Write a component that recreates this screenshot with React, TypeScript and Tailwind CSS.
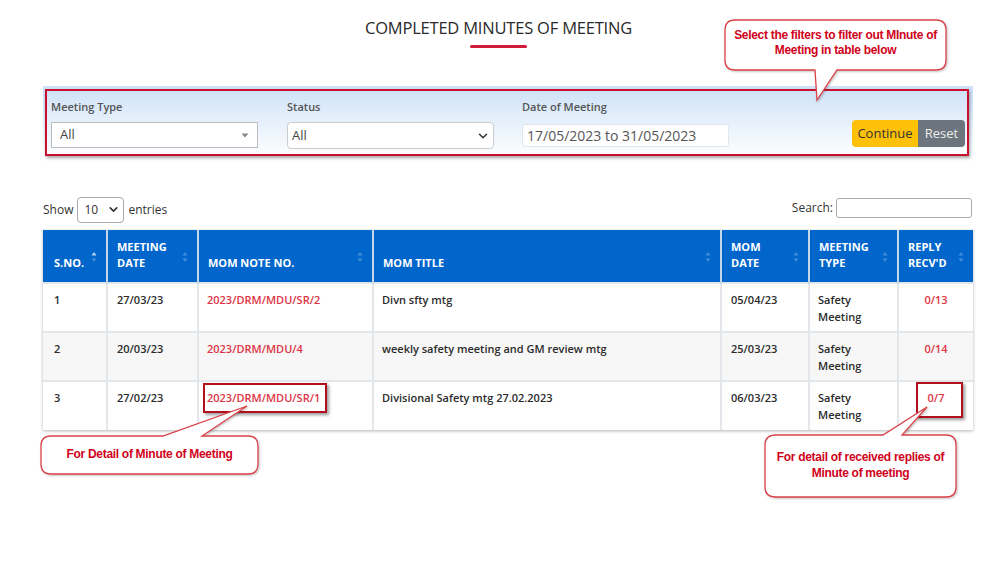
import { ChevronDown } from 'lucide-react';

const ROWS = [
  { sno: 1, date: '27/03/23', note: '2023/DRM/MDU/SR/2', title: 'Divn sfty mtg', momDate: '05/04/23', type: 'Safety Meeting', reply: '0/13' },
  { sno: 2, date: '20/03/23', note: '2023/DRM/MDU/4', title: 'weekly safety meeting and GM review mtg', momDate: '25/03/23', type: 'Safety Meeting', reply: '0/14' },
  { sno: 3, date: '27/02/23', note: '2023/DRM/MDU/SR/1', title: 'Divisional Safety mtg 27.02.2023', momDate: '06/03/23', type: 'Safety Meeting', reply: '0/7' },
];

const HEADERS = [
  { label: ['S.NO.'], w: 'w-[64px]', active: true },
  { label: ['MEETING', 'DATE'], w: 'w-[91px]' },
  { label: ['MOM NOTE NO.'], w: 'w-[175px]' },
  { label: ['MOM TITLE'], w: 'w-[348px]' },
  { label: ['MOM', 'DATE'], w: 'w-[88px]' },
  { label: ['MEETING', 'TYPE'], w: 'w-[89px]' },
  { label: ['REPLY', "RECV'D"], w: 'w-[75px]' },
];

function SortIcon({ active }: { active?: boolean }) {
  return (
    <svg width="6" height="12" viewBox="0 0 6 12" className="absolute right-[9px] top-[21px]">
      <path d="M3 1 L5.5 4.5 L0.5 4.5 Z" fill="#ffffff" fillOpacity={active ? 0.7 : 0.25} />
      <path d="M3 11 L5.5 7.5 L0.5 7.5 Z" fill="#ffffff" fillOpacity={0.25} />
    </svg>
  );
}

const cell = 'align-top pt-[7px] leading-[17px] border-l-2 border-[#e3e6ea]';

export default function App() {
  return (
    <div className="relative w-[1007px] h-[566px] bg-white overflow-hidden font-['Open_Sans','Liberation_Sans',sans-serif] text-[#333]">
      <div className="pl-[43px] pr-[34px] pt-[16px]">

        {/* Title */}
        <div className="flex flex-col items-center">
          <h1 className="text-[16.5px] leading-[24px] font-medium text-[#2a2a2a] tracking-[-0.2px] ml-[-19px]">COMPLETED MINUTES OF MEETING</h1>
          <div className="w-[57px] h-[3px] bg-[#d21c3c] mt-[5px] ml-[-19px] rounded-full" />
        </div>

        {/* Filters */}
        <div className="relative mt-[38px] h-[72px] bg-gradient-to-b from-[#cde1f8] to-[#ffffff] pl-[8px] pr-[7px] pt-[13px] flex items-start">
          <div className="w-[207px] flex flex-col">
            <label className="text-[11px] font-semibold text-[#555] leading-[16px]">Meeting Type</label>
            <div className="mt-[7px] h-[26px] bg-white border border-[#bbb] flex items-center justify-between px-[8px]">
              <span className="text-[13px] text-[#444]">All</span>
              <svg width="8" height="5" viewBox="0 0 8 5"><path d="M0.5 0.5 L7.5 0.5 L4 4.5 Z" fill="#888" /></svg>
            </div>
          </div>
          <div className="w-[207px] ml-[29px] flex flex-col">
            <label className="text-[11px] font-semibold text-[#555] leading-[16px]">Status</label>
            <div className="mt-[7px] h-[27px] bg-white border border-[#ccc] rounded-[4px] flex items-center justify-between pl-[4px] pr-[3px]">
              <span className="text-[13px] text-[#444]">All</span>
              <ChevronDown size={14} strokeWidth={2.5} className="text-[#333]" />
            </div>
          </div>
          <div className="w-[207px] ml-[28px] flex flex-col">
            <label className="text-[11px] font-semibold text-[#555] leading-[16px]">Date of Meeting</label>
            <div className="mt-[9px] h-[23px] bg-white border border-[#e2e6ea] rounded-[3px] flex items-center px-[4px]">
              <span className="text-[14px] text-[#555]">17/05/2023 to 31/05/2023</span>
            </div>
          </div>
          <div className="ml-auto mt-[21px] mr-[1px] flex h-[27px] rounded-[4px] overflow-hidden">
            <button className="w-[66px] bg-[#ffc107] text-[13px] text-[#333]">Continue</button>
            <button className="w-[47px] bg-[#6c757d] text-[13px] text-[#eee]">Reset</button>
          </div>
          <div className="absolute left-[2px] right-[4px] top-[3px] bottom-[2px] border-2 border-[#c8102e] shadow-[1px_2px_3px_rgba(0,0,0,0.35)] pointer-events-none" />
        </div>

        {/* Show / Search */}
        <div className="mt-[37px] flex items-center justify-between h-[26px]">
          <div className="flex items-center gap-[4px] text-[12px] text-[#333] pt-[3px]">
            <span>Show</span>
            <div className="w-[47px] h-[26px] border border-[#aaa] rounded-[4px] flex items-center justify-between pl-[6px] pr-[3px]">
              <span className="text-[12px]">10</span>
              <ChevronDown size={13} strokeWidth={3} />
            </div>
            <span>entries</span>
          </div>
          <div className="flex items-center gap-[3px] text-[12px] text-[#333] mr-[1px]">
            <span>Search:</span>
            <div className="w-[136px] h-[20px] border border-[#aaa] rounded-[3px] bg-white" />
          </div>
        </div>

        {/* Table */}
        <div className="mt-[9px] shadow-[0_1px_3px_rgba(0,0,0,0.3)]">
          <table className="w-full table-fixed border-collapse text-[11px] font-semibold text-[#2b2b2b]">
            <colgroup>
              {HEADERS.map((h, i) => (
                <col key={i} className={h.w} />
              ))}
            </colgroup>
            <thead>
              <tr className="h-[53px] bg-[#0066cc]">
                {HEADERS.map((h, i) => (
                  <th
                    key={i}
                    className={`relative align-bottom text-left ${i === 0 ? 'pl-[11px]' : 'pl-[9px] border-l-2 border-[#c6d7ec]'} pb-[11px] text-white font-bold leading-[16px]`}
                  >
                    {h.label.map((l) => (
                      <div key={l}>{l}</div>
                    ))}
                    <SortIcon active={h.active} />
                  </th>
                ))}
              </tr>
            </thead>
            <tbody>
              {ROWS.map((r) => (
                <tr key={r.sno} className={`h-[49px] ${r.sno === 2 ? 'bg-[#f7f7f7]' : 'bg-white'} border-t-2 border-[#e3e6ea]`}>
                  <td className="align-top pl-[11px] pt-[7px] leading-[17px]">{r.sno}</td>
                  <td className={`${cell} pl-[9px]`}>{r.date}</td>
                  <td className={`${cell} pl-[8px] text-[#dc3545]`}>{r.note}</td>
                  <td className={`${cell} pl-[8px]`}>{r.title}</td>
                  <td className={`${cell} pl-[9px]`}>{r.momDate}</td>
                  <td className={`${cell} pl-[8px] pr-[20px]`}>{r.type}</td>
                  <td className={`${cell} text-center text-[#dc3545]`}>{r.reply}</td>
                </tr>
              ))}
            </tbody>
          </table>
        </div>
      </div>

      {/* Annotation overlays */}
      <div className="absolute left-[203px] top-[383px] w-[124px] h-[30px] border-2 border-[#b3101e] shadow-[2px_2px_3px_rgba(0,0,0,0.4)] pointer-events-none" />
      <div className="absolute left-[916px] top-[382px] w-[47px] h-[36px] border-2 border-[#b3101e] shadow-[2px_2px_3px_rgba(0,0,0,0.4)] pointer-events-none" />

      <svg className="absolute left-0 top-0 pointer-events-none" width="1007" height="566" viewBox="0 0 1007 566">
        <defs>
          <filter id="sh" x="-10%" y="-10%" width="130%" height="140%">
            <feDropShadow dx="1" dy="1" stdDeviation="1" floodColor="#000" floodOpacity="0.25" />
          </filter>
        </defs>
        <path
          d="M735 20 H936 Q946 20 946 30 V60 Q946 70 936 70 H837 L817 100 L815 70 H735 Q725 70 725 60 V30 Q725 20 735 20 Z"
          fill="#fff"
          stroke="#d9434a"
          strokeWidth="1.3"
          filter="url(#sh)"
        />
        <path
          d="M51 436 H163 L247 406 L202 436 H248 Q258 436 258 446 V464 Q258 474 248 474 H51 Q41 474 41 464 V446 Q41 436 51 436 Z"
          fill="#fff"
          stroke="#d9434a"
          strokeWidth="1.3"
          filter="url(#sh)"
        />
        <path
          d="M776 435 H883 L927 407 L902 435 H946 Q956 435 956 445 V487 Q956 497 946 497 H776 Q765 497 765 487 V445 Q765 435 776 435 Z"
          fill="#fff"
          stroke="#d9434a"
          strokeWidth="1.3"
          filter="url(#sh)"
        />
      </svg>

      <div className="absolute left-[725px] top-[28px] w-[221px] text-center text-[12px] leading-[15px] font-bold text-[#d0021b] font-['Liberation_Sans_Narrow','Liberation_Sans',sans-serif] tracking-[-0.3px]">
        Select the filters to filter out MInute of
        <br />
        Meeting in table below
      </div>
      <div className="absolute left-[41px] top-[447px] w-[217px] text-center text-[12px] leading-[15px] font-bold text-[#d0021b] font-['Liberation_Sans_Narrow','Liberation_Sans',sans-serif] tracking-[-0.3px]">
        For Detail of Minute of Meeting
      </div>
      <div className="absolute left-[765px] top-[449px] w-[191px] text-center text-[12px] leading-[16px] font-bold text-[#d0021b] font-['Liberation_Sans_Narrow','Liberation_Sans',sans-serif] tracking-[-0.3px]">
        For detail of received replies of
        <br />
        Minute of meeting
      </div>
    </div>
  );
}
